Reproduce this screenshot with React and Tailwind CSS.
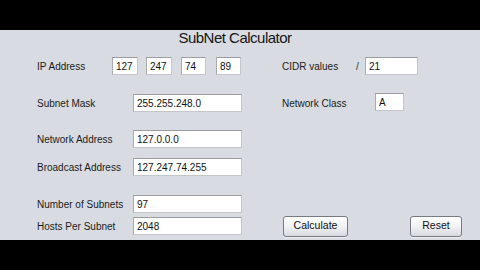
const font = { fontFamily: '"Liberation Sans", Arial, sans-serif' };

function Field({ value, className }) {
  return (
    <div
      className={
        "h-[18px] bg-white border border-[#c4c6ca] border-t-[#9a9ca1] border-l-[#a9abb0] flex items-center pl-[3px] text-[10px] text-[#111] " +
        (className || "")
      }
    >
      {value}
    </div>
  );
}

function Label({ children, className }) {
  return (
    <div className={"text-[10px] text-[#1b1b1b] " + (className || "")}>
      {children}
    </div>
  );
}

function Button({ children, className }) {
  return (
    <button
      className={
        "h-[21px] rounded-[3px] border border-[#777a80] bg-gradient-to-b from-[#ffffff] via-[#f1f2f4] to-[#d6d9df] text-[10.5px] text-[#111] shadow-[0_1px_0_#eef0f3] " +
        (className || "")
      }
    >
      {children}
    </button>
  );
}

export default function App() {
  return (
    <div className="w-[480px] h-[270px] bg-black pt-[30px]" style={font}>
      <div className="h-[210px] bg-[#d8dbe2]">
        {/* title */}
        <div className="h-[16px] leading-[16px] flex justify-center pr-[10px] text-[15px] tracking-[-0.5px] text-[#151515]">
          SubNet Calculator
        </div>

        {/* IP address row */}
        <div className="mt-[11px] h-[18px] flex items-center pl-[37px]">
          <div className="w-[245px] flex items-center">
            <Label className="w-[75px]">IP Address</Label>
            <Field value="127" className="w-[26px]" />
            <Field value="247" className="w-[26px] ml-[8px]" />
            <Field value="74" className="w-[25px] ml-[9px]" />
            <Field value="89" className="w-[25px] ml-[10px]" />
          </div>
          <Label className="w-[74px]">CIDR values</Label>
          <div className="w-[9px] text-[10px] text-[#333]">/</div>
          <Field value="21" className="w-[53px]" />
        </div>

        {/* subnet mask row */}
        <div className="mt-[19px] h-[18px] flex items-center pl-[37px]">
          <div className="w-[245px] flex items-center">
            <Label className="w-[96px]">Subnet Mask</Label>
            <Field value="255.255.248.0" className="w-[109px]" />
          </div>
          <Label className="w-[93px]">Network Class</Label>
          <Field value="A" className="w-[29px] -mt-[2px]" />
        </div>

        {/* network address */}
        <div className="mt-[18px] h-[18px] flex items-center pl-[37px]">
          <Label className="w-[96px]">Network Address</Label>
          <Field value="127.0.0.0" className="w-[109px]" />
        </div>

        {/* broadcast */}
        <div className="mt-[10px] h-[18px] flex items-center pl-[37px]">
          <Label className="w-[96px]">Broadcast Address</Label>
          <Field value="127.247.74.255" className="w-[109px]" />
        </div>

        {/* number of subnets */}
        <div className="mt-[19px] h-[18px] flex items-center pl-[37px]">
          <Label className="w-[96px]">Number of Subnets</Label>
          <Field value="97" className="w-[109px]" />
        </div>

        {/* hosts per subnet + buttons */}
        <div className="mt-[4px] h-[18px] flex items-center pl-[37px]">
          <div className="w-[246px] flex items-center">
            <Label className="w-[96px]">Hosts Per Subnet</Label>
            <Field value="2048" className="w-[109px]" />
          </div>
          <Button className="w-[65px]">Calculate</Button>
          <Button className="w-[52px] ml-[62px]">Reset</Button>
        </div>
      </div>
    </div>
  );
}
